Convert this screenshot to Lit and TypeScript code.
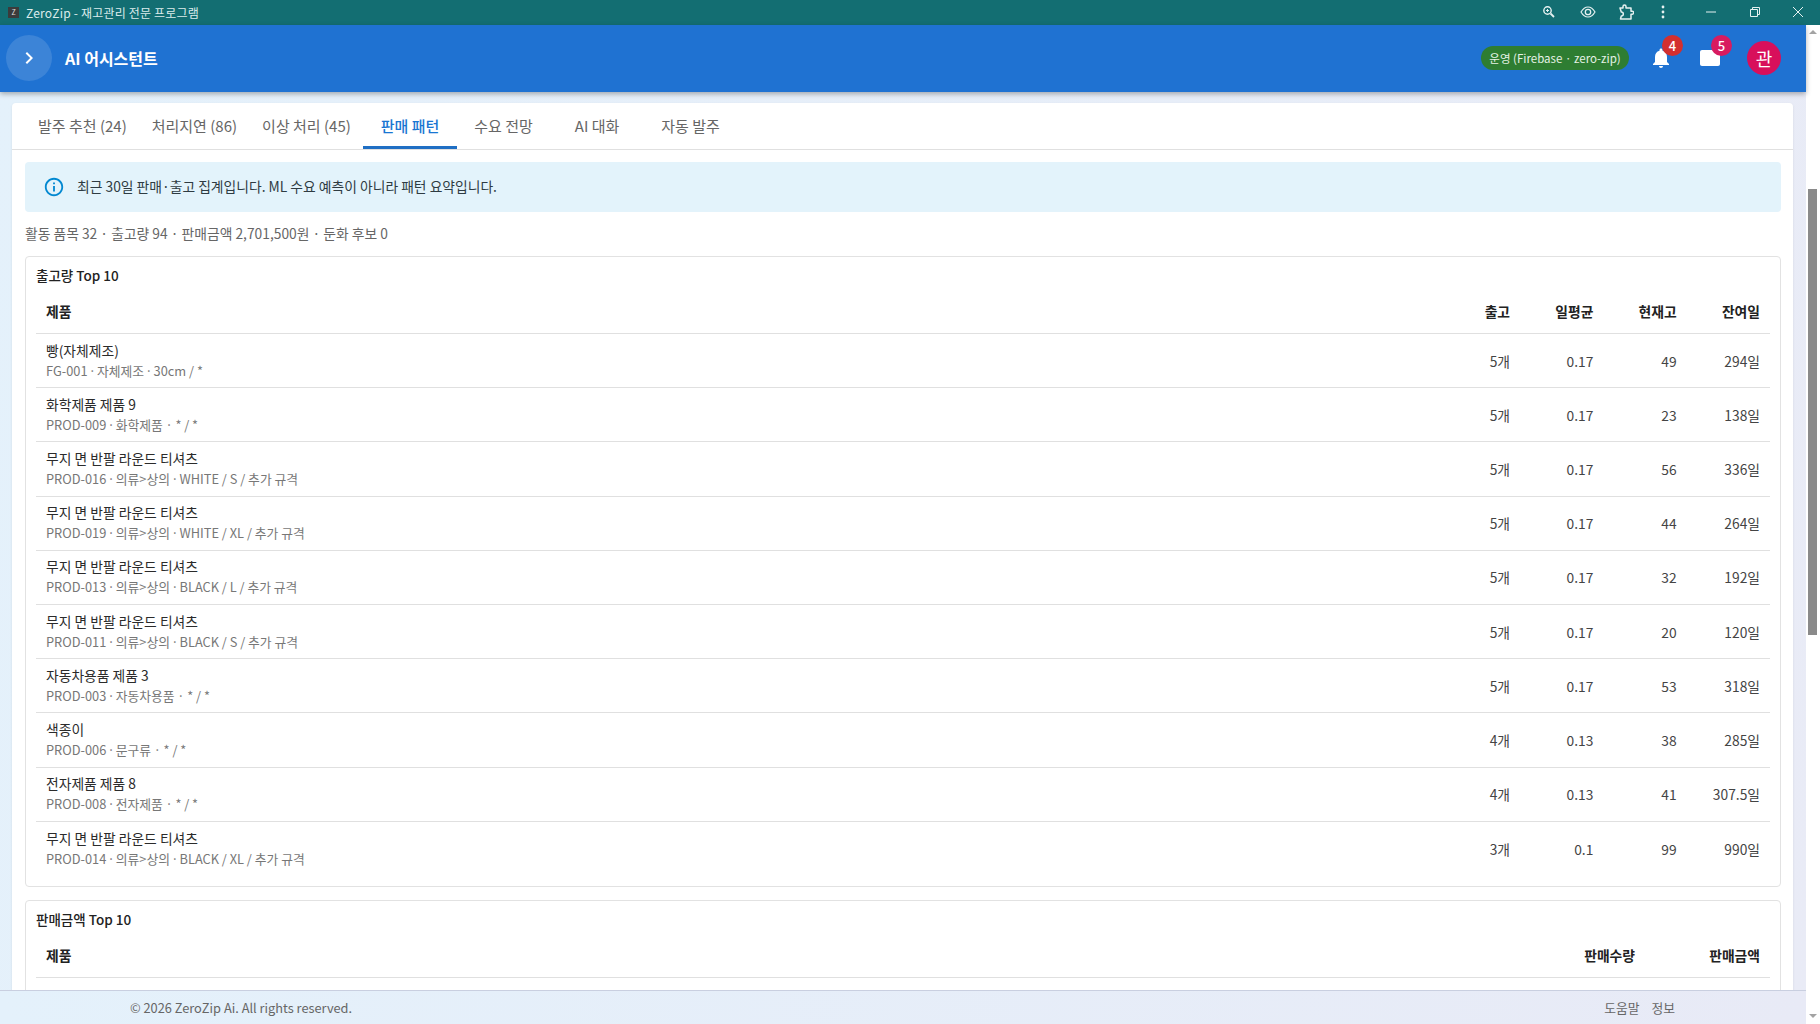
import { LitElement, html, css, svg } from "lit";
import { customElement, state } from "lit/decorators.js";

type Row = { name: string; sub: string; qty: string; avg: string; stock: string; left: string };

const TEE = "무지 면 반팔 라운드 티셔츠";

const ROWS: Row[] = [
  { name: "빵(자체제조)", sub: "FG-001 · 자체제조 · 30cm / *", qty: "5개", avg: "0.17", stock: "49", left: "294일" },
  { name: "화학제품 제품 9", sub: "PROD-009 · 화학제품 · * / *", qty: "5개", avg: "0.17", stock: "23", left: "138일" },
  { name: TEE, sub: "PROD-016 · 의류>상의 · WHITE / S / 추가 규격", qty: "5개", avg: "0.17", stock: "56", left: "336일" },
  { name: TEE, sub: "PROD-019 · 의류>상의 · WHITE / XL / 추가 규격", qty: "5개", avg: "0.17", stock: "44", left: "264일" },
  { name: TEE, sub: "PROD-013 · 의류>상의 · BLACK / L / 추가 규격", qty: "5개", avg: "0.17", stock: "32", left: "192일" },
  { name: TEE, sub: "PROD-011 · 의류>상의 · BLACK / S / 추가 규격", qty: "5개", avg: "0.17", stock: "20", left: "120일" },
  { name: "자동차용품 제품 3", sub: "PROD-003 · 자동차용품 · * / *", qty: "5개", avg: "0.17", stock: "53", left: "318일" },
  { name: "색종이", sub: "PROD-006 · 문구류 · * / *", qty: "4개", avg: "0.13", stock: "38", left: "285일" },
  { name: "전자제품 제품 8", sub: "PROD-008 · 전자제품 · * / *", qty: "4개", avg: "0.13", stock: "41", left: "307.5일" },
  { name: TEE, sub: "PROD-014 · 의류>상의 · BLACK / XL / 추가 규격", qty: "3개", avg: "0.1", stock: "99", left: "990일" },
];

const TABS = ["발주 추천 (24)", "처리지연 (86)", "이상 처리 (45)", "판매 패턴", "수요 전망", "AI 대화", "자동 발주"];

@customElement("app-root")
export class AppRoot extends LitElement {
  static styles = css`
    :host {
      display: block;
      font-family: "Noto Sans CJK KR", "Noto Sans", sans-serif;
      color: #222;
    }
    .window {
      display: flex;
      flex-direction: column;
      height: 100vh;
      overflow: hidden;
    }
    .titlebar {
      flex: none;
      height: 25px;
      box-sizing: border-box;
      display: flex;
      align-items: center;
      background: #136e72;
      color: #dcecec;
      font-size: 12px;
      padding: 0 0 1px 8px;
    }
    .favicon {
      width: 11px;
      height: 11px;
      margin-right: 7px;
      background: #3b3b3b;
      color: #ddd;
      font-size: 7px;
      line-height: 11px;
      text-align: center;
    }
    .title {
      flex: 1;
      letter-spacing: 0.2px;
    }
    .winicons {
      position: relative;
      width: 320px;
      height: 24px;
      flex: none;
    }
    .winicon {
      position: absolute;
      top: 0;
      width: 24px;
      height: 24px;
      display: flex;
      align-items: center;
      justify-content: center;
    }
    .body {
      flex: 1;
      min-height: 0;
      display: flex;
    }
    .page {
      flex: 1;
      min-width: 0;
      display: flex;
      flex-direction: column;
      background: linear-gradient(100deg, #e4f1fb 0%, #e9ebf6 100%);
    }
    .appbar {
      flex: none;
      height: 67px;
      box-sizing: border-box;
      position: relative;
      z-index: 2;
      display: flex;
      align-items: center;
      background: #1f72d2;
      box-shadow: 0 2px 5px rgba(0, 0, 0, 0.3);
      color: #fff;
      padding: 0 0 1px 6px;
    }
    .toggle {
      width: 46px;
      height: 46px;
      border-radius: 50%;
      background: rgba(255, 255, 255, 0.13);
      display: flex;
      align-items: center;
      justify-content: center;
    }
    .apptitle {
      flex: 1;
      margin-left: 13px;
      font-size: 16px;
      font-weight: 700;
    }
    .chip {
      height: 24px;
      width: 148px;
      box-sizing: border-box;
      border-radius: 12px;
      background: #2e7d32;
      color: #e6f2e6;
      font-size: 11.5px;
      display: flex;
      align-items: center;
      justify-content: center;
      white-space: nowrap;
      margin-right: 20px;
    }
    .iconbtn {
      position: relative;
      width: 24px;
      height: 24px;
      display: flex;
      align-items: center;
      justify-content: center;
      margin-right: 25px;
    }
    .badge {
      position: absolute;
      top: -11px;
      left: 13px;
      width: 21px;
      height: 21px;
      border-radius: 50%;
      color: #fff;
      font-size: 13px;
      font-weight: 500;
      display: flex;
      align-items: center;
      justify-content: center;
    }
    .badge.red {
      background: #d32f2f;
    }
    .badge.pink {
      background: #d81b60;
    }
    .avatar {
      width: 34px;
      height: 34px;
      border-radius: 50%;
      background: #d80f5b;
      color: #fff;
      font-size: 18px;
      display: flex;
      align-items: center;
      justify-content: center;
      margin-right: 25px;
    }
    .main {
      flex: 1;
      min-height: 0;
      overflow: hidden;
      padding: 11px 13px 0 12px;
    }
    .card {
      background: #fff;
      border-radius: 4px 4px 0 0;
      box-shadow: 0 1px 3px rgba(0, 0, 0, 0.08);
    }
    .tabs {
      display: flex;
      height: 47px;
      box-sizing: border-box;
      padding-left: 13.5px;
      border-bottom: 1px solid #e0e0e0;
    }
    .tab {
      min-width: 93.5px;
      box-sizing: border-box;
      padding: 0 12.5px 1px;
      height: 46px;
      display: flex;
      align-items: center;
      justify-content: center;
      font-size: 15px;
      color: #666;
      white-space: nowrap;
    }
    .tab.active {
      color: #1976d2;
      font-weight: 500;
      border-bottom: 3px solid #1f6fc4;
      padding-top: 2px;
      padding-bottom: 0;
    }
    .content {
      padding: 12px 12px 0 13px;
    }
    .alert {
      height: 50px;
      box-sizing: border-box;
      padding: 0 0 2px 18px;
      border-radius: 4px;
      background: #e3f3fb;
      display: flex;
      align-items: center;
      gap: 12px;
      font-size: 13.8px;
      color: #2e3b42;
    }
    .alert svg {
      margin-top: 2px;
    }
    .summary {
      font-size: 13.8px;
      color: #666;
      height: 44px;
      box-sizing: border-box;
      padding-bottom: 2px;
      display: flex;
      align-items: center;
    }
    .panel {
      border: 1px solid #e2e2e2;
      border-radius: 4px;
      padding: 0 10px 10px;
      margin-bottom: 13.5px;
    }
    .panel h3 {
      margin: 0;
      height: 26px;
      padding-top: 5px;
      font-size: 13.5px;
      font-weight: 500;
      display: flex;
      align-items: center;
      color: #222;
    }
    .row {
      display: grid;
      grid-template-columns: 1fr repeat(4, 83.33px);
      align-items: center;
      border-bottom: 1px solid #e0e0e0;
      height: 54.2px;
      box-sizing: border-box;
      padding-left: 10px;
      font-size: 13.8px;
      color: #444;
    }
    .row:last-child {
      border-bottom: none;
    }
    .row.head {
      height: 46px;
      font-weight: 700;
      color: #222;
    }
    .row.amount {
      grid-template-columns: 1fr repeat(2, 125px);
    }
    .row.amount .name {
      margin-top: 2px;
    }
    .num {
      text-align: right;
      padding-right: 10px;
    }
    .name {
      color: #2b2b2b;
      line-height: 20px;
      margin-top: -1px;
    }
    .sub {
      font-size: 12.8px;
      color: #777;
      line-height: 20px;
      min-height: 20px;
      padding-top: 1px;
    }
    .dot {
      display: inline-block;
      width: 9.5px;
      text-align: center;
    }
    .dot.wide {
      width: 12.5px;
    }
    .footer {
      flex: none;
      position: relative;
      z-index: 2;
      height: 34px;
      box-sizing: border-box;
      border-top: 1px solid #c9cfe0;
      background: linear-gradient(90deg, #e4f1fb 0%, #e8eaf6 100%);
      display: flex;
      align-items: center;
      padding: 0 131px 0 130px;
      font-size: 12.8px;
      color: #666;
    }
    .footer .copy {
      flex: 1;
    }
    .footer .links {
      display: flex;
      gap: 12px;
    }
    .scrollbar {
      flex: none;
      width: 14px;
      position: relative;
      background: #fff;
    }
    .thumb {
      position: absolute;
      left: 2px;
      width: 9px;
      top: 164px;
      height: 446px;
      background: #8a8a8a;
    }
    .arrow {
      position: absolute;
      left: 3px;
      width: 0;
      height: 0;
      border-left: 4px solid transparent;
      border-right: 4px solid transparent;
    }
    .arrow.up {
      top: 5px;
      border-bottom: 4px solid #a3a3a3;
    }
    .arrow.down {
      bottom: 6px;
      border-top: 4px solid #a3a3a3;
    }
  `;

  @state() activeTab = 3;

  private winIcons() {
    const stroke = "#e6f1f1";
    const items = [
      {
        x: 49,
        icon: svg`<circle cx="6.5" cy="6.5" r="3.7" fill="none" stroke=${stroke} stroke-width="1.4"/><path d="M9.5 9.5L13 13" stroke=${stroke} stroke-width="1.8"/><path d="M5 6.5h3M6.5 5v3" stroke=${stroke} stroke-width="1"/>`,
      },
      {
        x: 88,
        icon: svg`<path d="M1 8c2-3.4 4.4-5 7-5s5 1.6 7 5c-2 3.4-4.4 5-7 5s-5-1.6-7-5z" fill="none" stroke=${stroke} stroke-width="1.2"/><circle cx="8" cy="8" r="2.7" fill="none" stroke=${stroke} stroke-width="1.3"/>`,
      },
      {
        x: 126,
        icon: svg`<path d="M2 4h3V2.500a1.500 1.500 0 0 1 3 0V4h5v3.200h1.200a1.500 1.500 0 0 1 0 3H13V15H2.500l.8-3a2 2 0 0 0 0-4L2 4z" fill="none" stroke=${stroke} stroke-width="1.5" stroke-linejoin="round"/>`,
      },
      {
        x: 163,
        icon: svg`<circle cx="8" cy="3" r="1.4" fill=${stroke}/><circle cx="8" cy="8" r="1.4" fill=${stroke}/><circle cx="8" cy="13" r="1.4" fill=${stroke}/>`,
      },
      { x: 211, icon: svg`<path d="M3 8h10" stroke=${stroke} stroke-width="1"/>` },
      {
        x: 255,
        icon: svg`<path d="M3.500 5.500h7v7h-7z" fill="none" stroke=${stroke} stroke-width="1"/><path d="M5.500 5.500v-2h7v7h-2" fill="none" stroke=${stroke} stroke-width="1"/>`,
      },
      { x: 298, icon: svg`<path d="M3 3l10 10M13 3L3 13" stroke=${stroke} stroke-width="1"/>` },
    ];
    return items.map(
      (i) => html`<div class="winicon" style="left:${i.x - 12}px">
        <svg width="16" height="16" viewBox="0 0 16 16">${i.icon}</svg>
      </div>`
    );
  }

  // the dot before "* / *" sits wider apart in the reference
  private renderSub(sub: string) {
    const parts = sub.split(" · ");
    return parts.map((part, i) =>
      i === 0
        ? part
        : html`<span class="dot ${part.startsWith("*") ? "wide" : ""}">·</span>${part}`
    );
  }

  private renderRow(r: Row) {
    return html`<div class="row">
      <div>
        <div class="name">${r.name}</div>
        <div class="sub">${this.renderSub(r.sub)}</div>
      </div>
      <div class="num">${r.qty}</div>
      <div class="num">${r.avg}</div>
      <div class="num">${r.stock}</div>
      <div class="num">${r.left}</div>
    </div>`;
  }

  render() {
    return html`<div class="window">
      <div class="titlebar">
        <div class="favicon">Z</div>
        <div class="title">ZeroZip - 재고관리 전문 프로그램</div>
        <div class="winicons">${this.winIcons()}</div>
      </div>
      <div class="body">
        <div class="page">
          <header class="appbar">
            <div class="toggle">
              <svg width="24" height="24" viewBox="0 0 24 24" fill="#fff">
                <path d="M8.6 16.6 13.2 12 8.6 7.4 10 6l6 6-6 6z" />
              </svg>
            </div>
            <div class="apptitle">AI 어시스턴트</div>
            <div class="chip">운영 (Firebase · zero-zip)</div>
            <div class="iconbtn">
              <svg width="24" height="24" viewBox="0 0 24 24" fill="#fff">
                <path
                  d="M12 22c1.100 0 2-.9 2-2h-4c0 1.100.9 2 2 2zm6-6v-5c0-3.100-1.600-5.600-4.500-6.300V4c0-.8-.7-1.500-1.500-1.500s-1.500.7-1.500 1.500v.7C7.600 5.400 6 7.900 6 11v5l-2 2v1h16v-1l-2-2z"
                />
              </svg>
              <div class="badge red">4</div>
            </div>
            <div class="iconbtn">
              <svg width="24" height="24" viewBox="0 0 24 24" fill="#fff">
                <path d="M4 4h16c1.100 0 2 .9 2 2v12c0 1.100-.9 2-2 2H4c-1.100 0-2-.9-2-2V6c0-1.100.9-2 2-2z" />
                <path d="M17 4h5v5z" fill="#1f72d2" />
              </svg>
              <div class="badge pink">5</div>
            </div>
            <div class="avatar">관</div>
          </header>
          <main class="main">
            <div class="card">
              <div class="tabs">
                ${TABS.map(
                  (t, i) => html`<div class="tab ${i === this.activeTab ? "active" : ""}">${t}</div>`
                )}
              </div>
              <div class="content">
                <div class="alert">
                  <svg width="22" height="22" viewBox="0 0 24 24" fill="#0288d1">
                    <path
                      d="M11 7h2v2h-2zm0 4h2v6h-2zm1-9C6.480 2 2 6.480 2 12s4.480 10 10 10 10-4.480 10-10S17.520 2 12 2zm0 18c-4.410 0-8-3.590-8-8s3.590-8 8-8 8 3.590 8 8-3.590 8-8 8z"
                    />
                  </svg>
                  <span>최근 30일 판매·출고 집계입니다. ML 수요 예측이 아니라 패턴 요약입니다.</span>
                </div>
                <div class="summary">활동 품목 32 · 출고량 94 · 판매금액 2,701,500원 · 둔화 후보 0</div>
                <section class="panel">
                  <h3>출고량 Top 10</h3>
                  <div class="row head">
                    <div>제품</div>
                    <div class="num">출고</div>
                    <div class="num">일평균</div>
                    <div class="num">현재고</div>
                    <div class="num">잔여일</div>
                  </div>
                  ${ROWS.map((r) => this.renderRow(r))}
                </section>
                <section class="panel">
                  <h3>판매금액 Top 10</h3>
                  <div class="row head amount">
                    <div>제품</div>
                    <div class="num">판매수량</div>
                    <div class="num">판매금액</div>
                  </div>
                  <div class="row amount">
                    <div>
                      <div class="name">${TEE}</div>
                      <div class="sub"></div>
                    </div>
                    <div class="num"></div>
                    <div class="num"></div>
                  </div>
                </section>
              </div>
            </div>
          </main>
          <footer class="footer">
            <div class="copy">© 2026 ZeroZip Ai. All rights reserved.</div>
            <div class="links"><span>도움말</span><span>정보</span></div>
          </footer>
        </div>
        <div class="scrollbar">
          <div class="arrow up"></div>
          <div class="thumb"></div>
          <div class="arrow down"></div>
        </div>
      </div>
    </div>`;
  }
}
